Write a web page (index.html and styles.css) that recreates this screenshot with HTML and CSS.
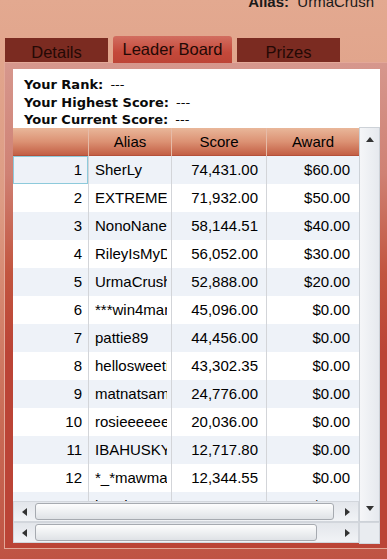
FILE: index.html
```html
<!DOCTYPE html>
<html lang="en">
<head>
    <meta charset="UTF-8">
    <meta name="viewport" content="width=device-width, initial-scale=1.0">
    <title>Leader Board</title>
    <link rel="stylesheet" href="styles.css">
</head>
<body>

<div class="top">
    <div class="alias"><b>Alias:</b>&nbsp; UrmaCrush</div>
</div>

<div class="tabs">
    <div class="tab">Details</div>
    <div class="tab active">Leader Board</div>
    <div class="tab">Prizes</div>
</div>

<div class="panel">
    <div class="info">
        <div><b>Your Rank:</b> <span class="val">---</span></div>
        <div><b>Your Highest Score:</b> <span class="val">---</span></div>
        <div><b>Your Current Score:</b> <span class="val">---</span></div>
    </div>

    <div class="board">
        <div class="table">
            <div class="thead">
                <div class="th"></div>
                <div class="th">Alias</div>
                <div class="th">Score</div>
                <div class="th">Award</div>
            </div>
            <div class="tbody">
                <div class="row"><div class="num focus">1</div><div class="name"><span>SherLy</span></div><div class="score">74,431.00</div><div class="award">$60.00</div></div>
                <div class="row"><div class="num">2</div><div class="name"><span>EXTREMEGAMER</span></div><div class="score">71,932.00</div><div class="award">$50.00</div></div>
                <div class="row"><div class="num">3</div><div class="name"><span>NonoNanette</span></div><div class="score">58,144.51</div><div class="award">$40.00</div></div>
                <div class="row"><div class="num">4</div><div class="name"><span>RileyIsMyDog</span></div><div class="score">56,052.00</div><div class="award">$30.00</div></div>
                <div class="row"><div class="num">5</div><div class="name"><span>UrmaCrush</span></div><div class="score">52,888.00</div><div class="award">$20.00</div></div>
                <div class="row"><div class="num">6</div><div class="name"><span>***win4mama</span></div><div class="score">45,096.00</div><div class="award">$0.00</div></div>
                <div class="row"><div class="num">7</div><div class="name"><span>pattie89</span></div><div class="score">44,456.00</div><div class="award">$0.00</div></div>
                <div class="row"><div class="num">8</div><div class="name"><span>hellosweetie</span></div><div class="score">43,302.35</div><div class="award">$0.00</div></div>
                <div class="row"><div class="num">9</div><div class="name"><span>matnatsam</span></div><div class="score">24,776.00</div><div class="award">$0.00</div></div>
                <div class="row"><div class="num">10</div><div class="name"><span>rosieeeeeee</span></div><div class="score">20,036.00</div><div class="award">$0.00</div></div>
                <div class="row"><div class="num">11</div><div class="name"><span>IBAHUSKY</span></div><div class="score">12,717.80</div><div class="award">$0.00</div></div>
                <div class="row"><div class="num">12</div><div class="name"><span>*_*mawmaw</span></div><div class="score">12,344.55</div><div class="award">$0.00</div></div>
                <div class="row"><div class="num">13</div><div class="name"><span>heather1</span></div><div class="score">9,253.00</div><div class="award">$0.00</div></div>
            </div>
            <!-- inner horizontal scrollbar -->
            <div class="hscroll">
                <div class="btn"><svg width="6" height="8" viewBox="0 0 6 8"><polygon points="5,0 5,8 0,4" fill="#333"/></svg></div>
                <div class="track"><div class="thumb" style="width: 299px;"></div></div>
                <div class="btn"><svg width="6" height="8" viewBox="0 0 6 8"><polygon points="0,0 0,8 5,4" fill="#333"/></svg></div>
            </div>
        </div>

        <div class="vscroll">
            <svg width="8" height="6" viewBox="0 0 8 6"><polygon points="0,5 8,5 4,0" fill="#333"/></svg>
            <svg width="8" height="6" viewBox="0 0 8 6"><polygon points="0,0 8,0 4,5" fill="#333"/></svg>
        </div>

        <!-- outer horizontal scrollbar -->
        <div class="hscroll">
            <div class="btn"><svg width="6" height="8" viewBox="0 0 6 8"><polygon points="5,0 5,8 0,4" fill="#333"/></svg></div>
            <div class="track"><div class="thumb" style="width: 282px;"></div></div>
            <div class="btn"><svg width="6" height="8" viewBox="0 0 6 8"><polygon points="0,0 0,8 5,4" fill="#333"/></svg></div>
        </div>
        <div class="corner"></div>
    </div>
</div>

</body>
</html>
```

FILE: styles.css
```css
body {
    margin: 0;
    width: 387px;
    height: 559px;
    overflow: hidden;
    font-family: "Liberation Sans", Arial, sans-serif;
    color: #000;
    background: linear-gradient(#e3a990 0, #dd9c84 200px, #c96c56 420px, #bf5343 559px);
}

/* Alias line, mostly cut off at the top */
.top {
    height: 36px;
    display: flex;
    justify-content: flex-end;
    padding-right: 13px;
}

.alias {
    margin-top: -7px;
    font-size: 15px;
    line-height: 17px;
    color: #1a1a1a;
}

/* Tabs */
.tabs {
    display: flex;
    align-items: flex-end;
    gap: 5px;
    height: 26px;
    padding-left: 5px;
}

.tab {
    width: 103px;
    height: 24px;
    background-color: #7b2b21;
    color: #240905;
    font-size: 16.5px;
    line-height: 28px;
    text-align: center;
}

.tab.active {
    width: 119px;
    height: 27px;
    margin-bottom: -1px;
    border-radius: 3px 3px 0 0;
    background: linear-gradient(#d26e60, #c4493b 60%, #bd4436);
    color: #220905;
    line-height: 27px;
    position: relative;
}

/* Panel */
.panel {
    margin-left: 4px;
    width: 367px;
    padding: 6px 7px 4px 8px;
    border: 1px solid #e3a898;
    background: linear-gradient(#d6978d 0, #cf8174 110px, #c2553f 210px, #bb4436 290px);
}

.info {
    height: 59px;
    box-sizing: border-box;
    padding: 7px 0 0 11px;
    background-color: #fff;
    font-family: "DejaVu Sans", Verdana, sans-serif;
    font-size: 13px;
    line-height: 17.5px;
    color: #0a0a0a;
    overflow: hidden;
}

.info .val {
    font-weight: normal;
    margin-left: 3px;
}

.board {
    display: grid;
    grid-template-columns: 346px 21px;
}

.table {
    display: flex;
    flex-direction: column;
}

/* Header */
.thead {
    display: grid;
    grid-template-columns: 76px 83px 95px 92px;
    height: 28px;
    background: linear-gradient(#e9b79a, #dc9274 50%, #c35f45);
    border-bottom: 1px solid #b4503a;
    box-sizing: border-box;
}

.th {
    font-size: 15px;
    line-height: 28px;
    text-align: center;
    border-right: 1px solid #e6bba8;
}

.th:last-child {
    border-right: none;
}

/* Rows */
.tbody {
    height: 345px;
    overflow: hidden;
    background-color: #fff;
}

.row {
    display: grid;
    grid-template-columns: 76px 83px 95px 92px;
    height: 28px;
    font-size: 15px;
    line-height: 28px;
    white-space: nowrap;
}

.row:nth-child(odd) {
    background-color: #eef2f8;
}

.row > div {
    overflow: hidden;
    border-right: 1px solid #d3d5d9;
}

.row > div:last-child {
    border-right: none;
}

.num {
    text-align: right;
    padding-right: 6px;
}

.num.focus {
    box-shadow: inset 0 0 0 1px #8dcadb;
}

/* alias text is clipped a few pixels before the column line */
.name {
    padding-left: 6px;
}

.name span {
    display: block;
    width: 72px;
    overflow: hidden;
}

.score {
    text-align: right;
    padding-right: 8px;
}

.award {
    text-align: right;
    padding-right: 9px;
}

/* Scrollbars */
.hscroll {
    display: flex;
    align-items: center;
    height: 21px;
    box-sizing: border-box;
    border: 1px solid #d2d6dc;
    background: linear-gradient(#e3e6eb, #f1f3f6);
}

.hscroll .btn {
    width: 21px;
    display: flex;
    justify-content: center;
    align-items: center;
}

.hscroll .track {
    flex: 1;
    display: flex;
}

.thumb {
    height: 17px;
    box-sizing: border-box;
    border: 1px solid #a6aab0;
    border-radius: 3px;
    background: linear-gradient(#fdfdfd, #eef0f2 50%, #dfe2e6);
}

.vscroll {
    display: flex;
    flex-direction: column;
    justify-content: space-between;
    align-items: center;
    padding: 9px 0 9px;
    box-sizing: border-box;
    border: 1px solid #cdd2d8;
    margin-top: -1px;
    background: linear-gradient(90deg, #f5f6f8, #e6e9ee);
}

.corner {
    height: 22px;
    background-color: #e9ecf0;
    border: 1px solid #d2d6dc;
    box-sizing: border-box;
}
```
